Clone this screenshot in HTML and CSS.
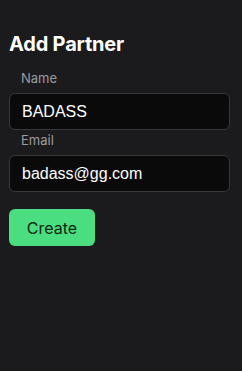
FILE: index.html
```html
<!DOCTYPE html>
<html>
<head>
<meta charset="utf-8">
<link rel="stylesheet" href="styles.css">
</head>
<body>
<div class="panel">
  <h2 class="title">Add Partner</h2>
  <form class="form">
    <label class="field">
      <span class="label">Name</span>
      <input class="input" type="text" value="BADASS">
    </label>
    <label class="field">
      <span class="label">Email</span>
      <input class="input" type="text" value="badass@gg.com">
    </label>
    <button class="btn" type="button">Create</button>
  </form>
</div>
</body>
</html>
```
FILE: styles.css
```css
html, body {
  margin: 0;
  padding: 0;
  background: #1b1b1d;
  height: 100%;
}
.panel {
  padding: 32px 12px 0 9px;
  font-family: Inter, "Noto Sans", sans-serif;
}
.title {
  margin: 0 0 14px;
  font-size: 20px;
  font-weight: 700;
  line-height: 24px;
  color: #ffffff;
  letter-spacing: -0.2px;
}
.form {
  display: flex;
  flex-direction: column;
}
.field {
  display: flex;
  flex-direction: column;
}
.label {
  font-size: 13px;
  line-height: 16px;
  color: #9b9ba0;
  padding-left: 12px;
  margin-bottom: 7px;
}
.input {
  box-sizing: border-box;
  height: 37px;
  width: 100%;
  background: #0a0a0b;
  border: 1px solid #38383b;
  border-radius: 6px;
  padding: 0 12px;
  font-family: "Liberation Sans", Arial, sans-serif;
  font-size: 16px;
  color: #ffffff;
  outline: none;
  margin: 0 0 2px;
}
.btn {
  align-self: flex-start;
  margin-top: 15px;
  width: 86px;
  height: 37px;
  border: none;
  border-radius: 6px;
  background: #4ade80;
  color: #0b2614;
  font-family: Inter, "Noto Sans", sans-serif;
  font-size: 16px;
  padding: 0;
}
```
